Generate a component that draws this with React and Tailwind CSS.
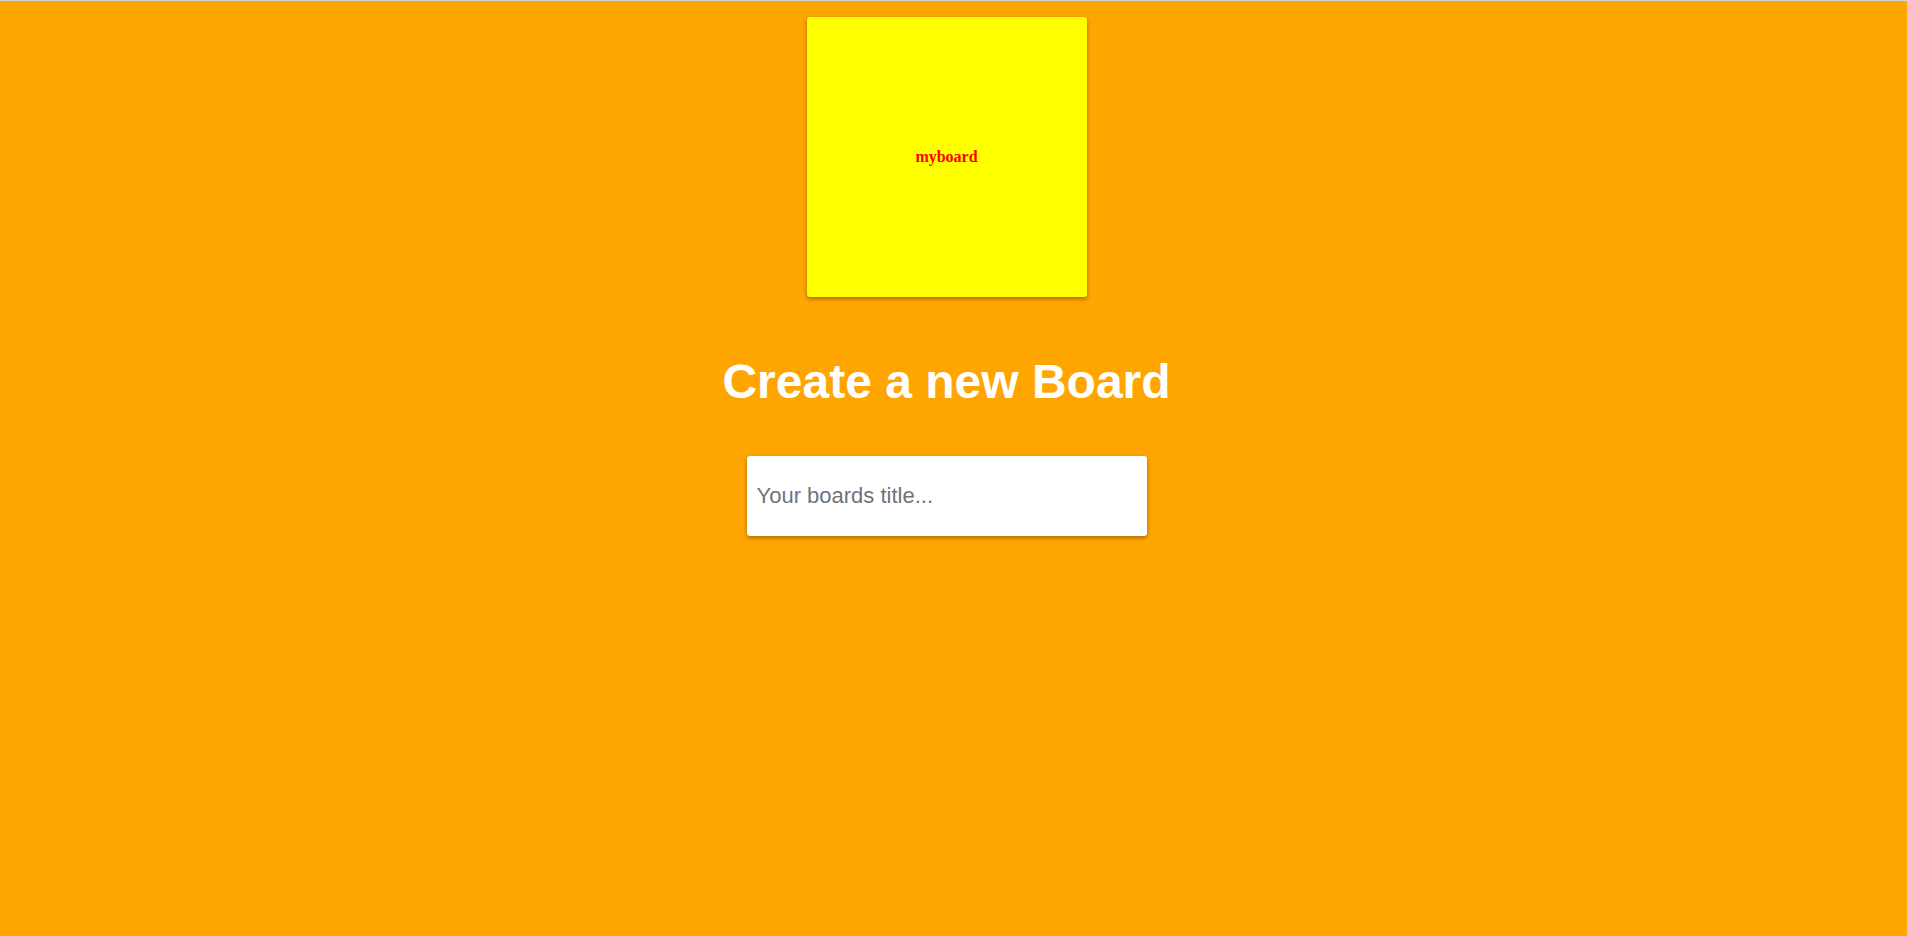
import React from 'react';

export default function App() {
  return (
    <div className="min-h-[936px] bg-[#ffa500] font-['Liberation_Sans',Arial,sans-serif]">
      <div className="h-px bg-[#d6d6d6]" />
      <main className="flex flex-col items-center pr-[14px] pt-4">
        <div className="flex h-[280px] w-[280px] items-center justify-center rounded-[3px] bg-[#ffff00] shadow-[0_2px_4px_rgba(0,0,0,0.35)]">
          <span className="font-['Liberation_Serif','Times_New_Roman',serif] text-base font-bold text-[#ff0000]">
            myboard
          </span>
        </div>
        <h1 className="mt-[57px] text-[48px] font-bold leading-[55px] text-white">Create a new Board</h1>
        <input
          className="mt-[47px] h-[80px] w-[400px] rounded-[3px] bg-white px-[10px] text-[22px] text-[#333] shadow-[0_2px_4px_rgba(0,0,0,0.35)] outline-none placeholder:text-[#6c757d]"
          placeholder="Your boards title..."
        />
      </main>
    </div>
  );
}
